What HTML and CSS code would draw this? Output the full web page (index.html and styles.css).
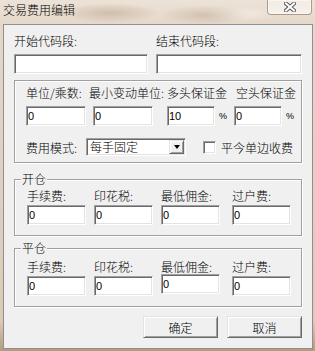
FILE: index.html
```html
<!DOCTYPE html>
<html>
  <head>
    <meta charset="UTF-8" />
    <title>交易费用编辑</title>
    <link rel="stylesheet" href="styles.css">
  </head>
  <body>
    <div class="window">

      <!-- Aero title bar -->
      <div class="titlebar">
        <span class="title">交易费用编辑</span>
        <span class="close-btn">
          <svg width="12" height="10" viewBox="0 0 12 10">
            <path d="M2 1.5 L10 8.5 M10 1.5 L2 8.5" stroke="#5a5a5a" stroke-width="4" stroke-linecap="square" fill="none"/>
            <path d="M2 1.5 L10 8.5 M10 1.5 L2 8.5" stroke="#fff" stroke-width="2" stroke-linecap="square" fill="none"/>
          </svg>
        </span>
      </div>

      <div class="client">

        <!-- Code range -->
        <div class="code-row">
          <div class="field">
            <label>开始代码段:</label>
            <input class="edit" type="text" />
          </div>
          <div class="field">
            <label>结束代码段:</label>
            <input class="edit" type="text" />
          </div>
        </div>

        <!-- Contract parameters -->
        <fieldset class="group params">
          <div class="param-labels">
            <span class="pl-1">单位/乘数:</span>
            <span class="pl-2">最小变动单位:</span>
            <span class="pl-3">多头保证金</span>
            <span>空头保证金</span>
          </div>
          <div class="param-inputs">
            <span class="cell cell-1"><input class="edit w60" value="0" /></span>
            <span class="cell cell-2"><input class="edit w60" value="0" /></span>
            <span class="cell cell-3"><input class="edit w48" value="10" /><span class="pct">%</span></span>
            <span class="cell"><input class="edit w48" value="0" /><span class="pct">%</span></span>
          </div>
          <div class="mode-row">
            <span class="mode-label">费用模式:</span>
            <div class="combo">
              <span class="combo-text">每手固定</span>
              <span class="combo-btn"><span class="arrow"></span></span>
            </div>
            <span class="check"></span>
            <span class="check-label">平今单边收费</span>
          </div>
        </fieldset>

        <!-- Open -->
        <fieldset class="group fees">
          <legend>开仓</legend>
          <div class="fee-grid">
            <label>手续费:</label>
            <label>印花税:</label>
            <label>最低佣金:</label>
            <label>过户费:</label>
            <input class="edit w59" value="0" />
            <input class="edit w59" value="0" />
            <input class="edit w59" value="0" />
            <input class="edit w59" value="0" />
          </div>
        </fieldset>

        <!-- Close -->
        <fieldset class="group fees fees-close">
          <legend>平仓</legend>
          <div class="fee-grid">
            <label>手续费:</label>
            <label>印花税:</label>
            <label>最低佣金:</label>
            <label>过户费:</label>
            <input class="edit w59" value="0" />
            <input class="edit w59" value="0" />
            <input class="edit w59 raised" value="0" />
            <input class="edit w59" value="0" />
          </div>
        </fieldset>

        <div class="button-row">
          <button class="btn">确定</button>
          <button class="btn">取消</button>
        </div>
      </div>
    </div>
  </body>
</html>
```

FILE: styles.css
```css
body {
  margin: 0;
  width: 315px;
  height: 351px;
  overflow: hidden;
  font-family: "Noto Sans CJK SC", "Liberation Sans", sans-serif;
  font-size: 12px;
  font-weight: 300;
  color: #000;
  background:
    radial-gradient(ellipse 50px 10px at 110px 13px, rgba(160, 130, 100, 0.35), transparent),
    radial-gradient(ellipse 45px 10px at 205px 15px, rgba(160, 130, 100, 0.3), transparent),
    radial-gradient(ellipse 40px 8px at 240px 14px, rgba(255, 255, 255, 0.4), transparent),
    linear-gradient(#ece2d7, #e4d6c8 30px, #dccab8 320px, #b49a80);
}

.window {
  display: flex;
  flex-direction: column;
  height: 100%;
  padding: 0 2px 0 3px;
  box-sizing: border-box;
}

/* Title bar */
.titlebar {
  height: 24px;
  display: flex;
  justify-content: space-between;
  align-items: flex-start;
}
.title {
  padding-top: 2px;
  line-height: 16px;
}
.close-btn {
  width: 43px;
  height: 14px;
  margin-right: 1px;
  display: flex;
  align-items: center;
  justify-content: center;
  border: 1px solid rgba(110, 90, 70, 0.55);
  border-top: none;
  border-radius: 0 0 4px 4px;
  background: linear-gradient(rgba(255, 255, 255, 0.35), rgba(255, 255, 255, 0.6));
  box-shadow: inset 0 0 0 1px rgba(255, 255, 255, 0.5);
}

/* Dialog client area */
.client {
  height: 325px;
  box-sizing: border-box;
  border: 1px solid #8f8f8f;
  background: #f0f0f0;
  padding: 8px 10px 9px;
}

/* Sunken edit box */
.edit {
  box-sizing: border-box;
  height: 20px;
  margin: 0;
  padding: 0 0 0 1px;
  font-family: "Liberation Sans", sans-serif;
  font-size: 11px;
  color: #000;
  background: #fff;
  border: 1px solid;
  border-color: #a0a0a0 #fff #fff #a0a0a0;
  box-shadow: inset 1px 1px 0 #696969, inset -1px -1px 0 #e3e3e3;
  outline: none;
}
.w60 { width: 60px; }
.w59 { width: 59px; }
.w48 { width: 48px; }
.raised { margin-top: -2px; }

.code-row {
  display: grid;
  grid-template-columns: 134px 146px;
  column-gap: 8px;
}
.field label {
  display: block;
  line-height: 16px;
}
.field .edit {
  width: 100%;
  margin-top: 5px;
}

/* Etched group boxes */
.group {
  margin: 0;
  padding: 0;
  min-width: 0;
  border: 1px solid #a0a0a0;
  box-shadow: 1px 1px 0 #fff, inset 1px 1px 0 #fff;
}
.group legend {
  margin-left: 6px;
  padding: 0 1px;
  line-height: 14px;
  background: #f0f0f0;
}

.params {
  margin-top: 6px;
  padding: 4px 0 6px 11px;
}
.param-labels {
  display: flex;
  line-height: 16px;
  white-space: nowrap;
}
.pl-1 { width: 63px; }
.pl-2 { width: 78px; }
.pl-3 { width: 69px; }

.param-inputs {
  display: flex;
  align-items: center;
  margin-top: 5px;
}
.cell {
  display: flex;
  align-items: center;
}
.cell-1 { width: 67px; }
.cell-2 { width: 74px; }
.cell-3 { width: 67px; }
.pct {
  margin-left: 4px;
  font-family: "Liberation Sans", sans-serif;
  font-size: 9px;
}

.mode-row {
  display: flex;
  align-items: center;
  height: 18px;
  margin-top: 12px;
}
.mode-label {
  width: 60px;
}
.combo {
  box-sizing: border-box;
  width: 100px;
  height: 18px;
  display: flex;
  align-items: center;
  background: #fff;
  border: 1px solid;
  border-color: #a0a0a0 #fff #fff #a0a0a0;
  box-shadow: inset 1px 1px 0 #696969, inset -1px -1px 0 #e3e3e3;
  padding: 1px;
}
.combo-text {
  flex: 1;
  padding-left: 2px;
  line-height: 14px;
}
.combo-btn {
  box-sizing: border-box;
  width: 15px;
  height: 14px;
  display: flex;
  align-items: center;
  justify-content: center;
  background: #f0f0f0;
  border: 1px solid;
  border-color: #e3e3e3 #696969 #696969 #e3e3e3;
  box-shadow: inset 1px 1px 0 #fff, inset -1px -1px 0 #a0a0a0;
}
.arrow {
  width: 0;
  height: 0;
  border-left: 3.5px solid transparent;
  border-right: 3.5px solid transparent;
  border-top: 4px solid #000;
}
.check {
  box-sizing: border-box;
  width: 13px;
  height: 13px;
  margin-left: 17px;
  background: #fff;
  border: 1px solid;
  border-color: #a0a0a0 #fff #fff #a0a0a0;
  box-shadow: inset 1px 1px 0 #696969, inset -1px -1px 0 #e3e3e3;
}
.check-label {
  margin-left: 5px;
}

/* Open / close fee groups */
.fees {
  margin-top: 9px;
  padding: 2px 0 10px;
}
.fees-close {
  margin-top: 5px;
  padding: 4px 0 10px;
}
.fee-grid {
  display: grid;
  grid-template-columns: 67px 67px 71px 1fr;
  row-gap: 1px;
  padding-left: 12px;
}
.fee-grid label {
  line-height: 16px;
}

/* Buttons */
.button-row {
  display: flex;
  justify-content: flex-end;
  gap: 9px;
  margin-top: 9px;
}
.btn {
  box-sizing: border-box;
  width: 75px;
  height: 22px;
  padding: 0;
  font-family: "Noto Sans CJK SC", sans-serif;
  font-size: 12px;
  font-weight: 300;
  color: #000;
  background: #f0f0f0;
  border: 1px solid;
  border-color: #e3e3e3 #696969 #696969 #e3e3e3;
  box-shadow: inset 1px 1px 0 #fff, inset -1px -1px 0 #a0a0a0;
}
```
